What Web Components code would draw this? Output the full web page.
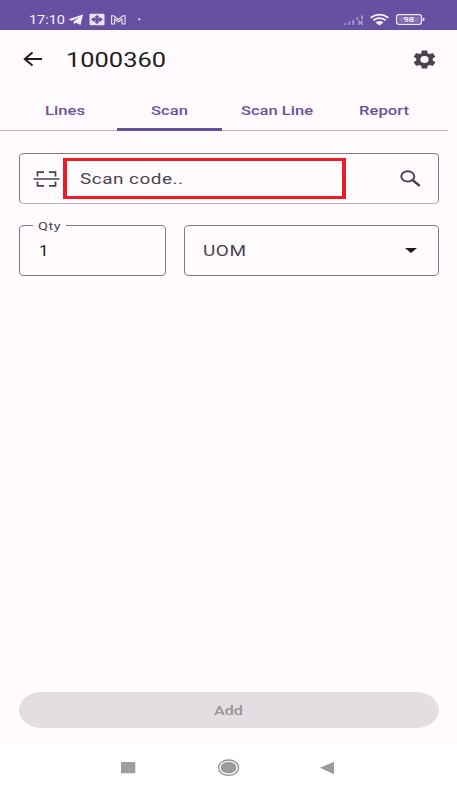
<!DOCTYPE html>
<html lang="en">
<head>
<meta charset="utf-8">
<title>1000360</title>
<style>
html,body{margin:0;height:100%;background:#fffbfe;font-family:Roboto,"Liberation Sans",sans-serif;overflow:hidden}
</style>
</head>
<body>
<scan-screen></scan-screen>
<script>
const define = (name, html, init) => customElements.define(name, class extends HTMLElement {
  connectedCallback() {
    if (this.shadowRoot) return;
    const t = document.createElement('template');
    t.innerHTML = html;
    this.attachShadow({mode: 'open'}).append(t.content.cloneNode(true));
    if (init) init.call(this, this.shadowRoot);
  }
});

// A single line of text stretched horizontally to the width given in its attribute.
define('wide-text', `<style>
:host{display:block;white-space:nowrap;flex:none;line-height:20px;height:20px}
span{display:inline-block;transform-origin:0 50%}
</style><span></span>`, function (root) {
  const s = root.querySelector('span');
  const w = +this.getAttribute('width');
  s.textContent = this.getAttribute('text');
  this.style.width = w + 'px';
  s.style.transform = 'scaleX(' + w / s.getBoundingClientRect().width + ')';
});

define('status-bar', `<style>
:host{display:flex;height:30px;box-sizing:border-box;background:#6750a1;color:#f3effa;padding:9px 32px 0 29px;justify-content:space-between}
div{display:flex;align-items:center;height:21px}
wide-text{font-size:12.6px}
svg{display:block}
</style>
<div><wide-text text="17:10" width="36"></wide-text>
<svg width="80" height="21" viewBox="65 9 80 21" fill="none">
<path d="M68.5 19.3 83 14.5 80.5 25 76 22.7 74 24.3 73.6 21.5 79.5 17.2 71.8 20.8z" fill="#f3effa"/>
<rect x="89.5" y="13.7" width="15" height="11.6" rx="1" fill="#e9e3f4"/>
<path d="m97 15 6 4.5-6 4.5-6-4.5z" fill="#6750a1"/><path d="M93 15.5l8 8M101 15.5l-8 8" stroke="#e9e3f4" stroke-width="1"/><path d="m97 17.6 2.7 1.9-2.7 1.9-2.7-1.9z" fill="#6750a1"/>
<path d="M111.6 24v-8.3h2l4.7 3.8 4.7-3.8h2V24h-3v-5l-3.7 2.8-3.7-2.8v5z" stroke="#eee8f7" stroke-width="1.1"/>
<rect x="138.3" y="18.4" width="2" height="1.8" fill="#eee8f7"/>
</svg></div>
<div><svg width="82" height="21" viewBox="343 9 82 21" fill="none">
<path d="M345.4 25v-2M349.3 25v-3.5M353.2 25v-5M357.3 20v-2.6M362 19.5v-4" stroke="#a393c9" stroke-width="2"/>
<path d="m358 20.7 5 4m0-4-5 4" stroke="#b4a7d5" stroke-width="1.4"/>
<path d="M370.6 17.8Q379.5 11.3 388.4 17.8M373.4 20.2Q379.5 16 385.6 20.2" stroke="#f5f1fb" stroke-width="1.8"/>
<path d="M375.5 22.4Q379.5 19.8 383.5 22.4L379.5 25.5z" fill="#f5f1fb"/>
<rect x="396.6" y="14.7" width="24.8" height="9.6" rx="2.4" stroke="#f1ecf9" stroke-width="1.3"/>
<rect x="398.5" y="16.5" width="21" height="6" fill="#8975b8"/>
<rect x="422.7" y="17.8" width="1.7" height="3.2" fill="#eee8f7"/>
<text x="403.5" y="22.4" font-size="8" font-weight="500" textLength="10.6" lengthAdjust="spacingAndGlyphs" fill="#fff">98</text>
</svg></div>`);

define('title-bar', `<style>
:host{display:flex;height:60px;align-items:center;box-sizing:border-box;padding:0 21px 2px 23px;color:#1f1d21}
wide-text{font-size:20.8px;margin-left:23px;padding-top:1px}
.gear{margin-left:auto}
svg{display:block}
</style>
<svg width="20" height="16" viewBox="0 0 20 16" fill="none" stroke="#1f1d21" stroke-width="2"><path d="M19 8H2M9.5 1.6 1.8 8l7.7 6.4"/></svg>
<wide-text text="1000360" width="100"></wide-text>
<svg class="gear" width="23" height="19" viewBox="2 2 20 20" preserveAspectRatio="none" fill="#48444c"><path d="M19.14 12.94c.04-.3.06-.61.06-.94s-.02-.64-.07-.94l2.03-1.58a.49.49 0 0 0 .12-.61l-1.92-3.32a.49.49 0 0 0-.59-.22l-2.39.96a7 7 0 0 0-1.62-.94l-.36-2.54a.48.48 0 0 0-.48-.41h-3.84a.47.47 0 0 0-.47.41l-.36 2.54a7.4 7.4 0 0 0-1.62.94l-2.39-.96a.47.47 0 0 0-.59.22L2.74 8.87a.47.47 0 0 0 .12.61l2.03 1.58a6 6 0 0 0 0 1.88l-2.03 1.58a.49.49 0 0 0-.12.61l1.92 3.32c.12.22.37.29.59.22l2.39-.96c.5.38 1.03.7 1.62.94l.36 2.54c.05.24.24.41.48.41h3.84c.24 0 .44-.17.47-.41l.36-2.54a7.4 7.4 0 0 0 1.62-.94l2.39.96c.22.08.47 0 .59-.22l1.92-3.32a.47.47 0 0 0-.12-.61zM12 15.6a3.6 3.6 0 1 1 0-7.2 3.6 3.6 0 0 1 0 7.2z"/></svg>`);

define('tab-item', `<style>
:host{display:flex;justify-content:center;align-items:center;box-sizing:border-box;height:41px;border-bottom:1px solid #bbb6be;color:#67549b;font-size:13.6px;font-weight:500}
:host([active]){border-bottom:3px solid #6650a0}
:host([active]) slot{display:block;margin-top:2px}
</style><slot></slot>`);

define('tab-bar', `<style>
:host{display:grid;grid-template-columns:117px 105px 109px 117px;height:41px}
.first{padding-left:12px}
.last{padding-right:12px}
</style>
<tab-item class="first"><wide-text text="Lines" width="40"></wide-text></tab-item>
<tab-item active><wide-text text="Scan" width="37"></wide-text></tab-item>
<tab-item><wide-text text="Scan Line" width="72"></wide-text></tab-item>
<tab-item class="last"><wide-text text="Report" width="50"></wide-text></tab-item>`);

define('outline-field', `<style>
:host{display:flex;align-items:center;box-sizing:border-box;position:relative;height:51px;border:1px solid #7f7a83;border-radius:5px/4px;color:#49454e;font-size:15.2px;letter-spacing:.4px}
.label{position:absolute;left:13px;top:-10px;background:#fffbfe;padding:0 5px;font-size:11.6px}
.label:empty{display:none}
</style><div class="label"></div><slot></slot>`, function (root) {
  if (this.hasAttribute('label')) {
    const t = document.createElement('wide-text');
    t.setAttribute('text', this.getAttribute('label'));
    t.setAttribute('width', 23);
    root.querySelector('.label').append(t);
  }
});

define('scan-form', `<style>
:host{display:grid;grid-template-columns:147px 255px;column-gap:18px;row-gap:21px;padding:22px 18.5px 0}
.search{grid-column:1/3;padding-left:13.5px;border-bottom-color:#b3b0b5}
.box{box-sizing:border-box;width:283px;height:41px;margin-left:3px;border:solid #ed1c24;border-width:3px 4px;display:flex;align-items:center;padding:1px 0 0 12.5px}
svg{display:block;flex:none}
.lens{margin-left:53.5px}
.qty{padding-left:19px}
.uom{padding-left:18.5px}
.qty wide-text,.uom wide-text{padding-top:1px}
.uom svg{margin-left:auto;margin-right:21px}
</style>
<outline-field class="search">
<svg width="27" height="18" viewBox="0 0 27 18" fill="none" stroke="#48444d" stroke-width="1.7"><path d="M.5 9h26M4.5 6.5V2.2H11M16 2.2h6.5v4.3M4.5 11.5v4.3H11M16 15.8h6.5v-4.3"/></svg>
<div class="box"><wide-text text="Scan code.." width="103.5"></wide-text></div>
<svg class="lens" width="22" height="17" viewBox="0 0 22 17" fill="none" stroke="#48444d"><ellipse cx="7.8" cy="6.4" rx="6.5" ry="5.2" stroke-width="1.9"/><path d="m12.5 10 7.3 6" stroke-width="2.3"/></svg>
</outline-field>
<outline-field class="qty" label="Qty"><wide-text text="1" width="10" style="color:#1f1d21"></wide-text></outline-field>
<outline-field class="uom"><wide-text text="UOM" width="43.5"></wide-text>
<svg width="12" height="5" viewBox="0 0 12 5"><path d="M0 0h12L6 5z" fill="#1c1b1f"/></svg></outline-field>`);

define('pill-button', `<style>
:host{display:flex;justify-content:center;align-items:center;height:36px;background:#e3dee2;color:#98939a;border-radius:23px/18px;font-size:13.6px;font-weight:500}
</style><slot></slot>`);

define('nav-bar', `<style>
:host{display:flex;height:43px;background:#fff;justify-content:center;box-sizing:border-box;padding-top:1px}
svg{display:block}
</style>
<svg width="457" height="40" viewBox="0 747 457 40"><rect x="121" y="762" width="14.3" height="11.3" rx=".5" fill="#9e9e9e"/><ellipse cx="228.6" cy="767.7" rx="10" ry="7.7" fill="none" stroke="#929292" stroke-width="1.3"/><ellipse cx="228.6" cy="767.7" rx="7.9" ry="5.9" fill="#9b9b9b"/><path d="M320 767.8 334 761.8v12.4z" fill="#9b9b9b"/></svg>`);

define('scan-screen', `<style>
:host{display:flex;flex-direction:column;width:457px;height:789px;background:#fffbfe}
pill-button{margin:auto 18.5px 18px}
</style>
<status-bar></status-bar><title-bar></title-bar><tab-bar></tab-bar><scan-form></scan-form>
<pill-button><wide-text text="Add" width="29"></wide-text></pill-button>
<nav-bar></nav-bar>`);
</script>
</body>
</html>
